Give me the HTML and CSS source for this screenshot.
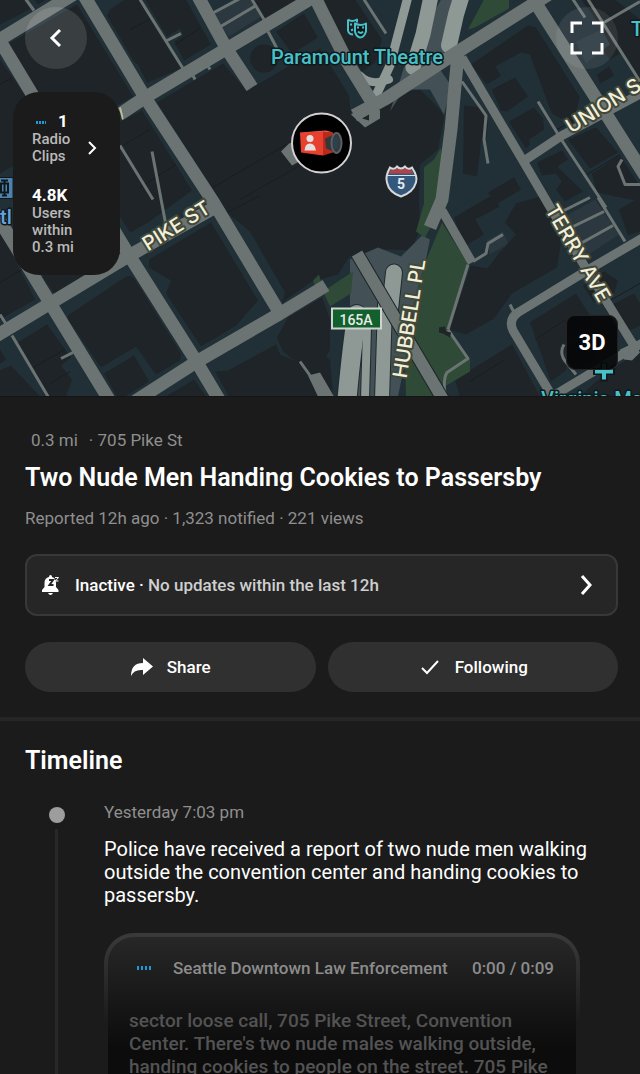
FILE: index.html
```html
<!doctype html>
<html lang="en">
<head>
<meta charset="utf-8">
<meta name="viewport" content="width=device-width, initial-scale=1">
<title>Two Nude Men Handing Cookies to Passersby</title>
<link rel="stylesheet" href="styles.css">
</head>
<body>
<div class="app">
    <section class="map-box">
        <svg class="map" viewBox="0 0 640 397" preserveAspectRatio="xMidYMid slice" role="img" aria-label="Map of the incident">
            <rect class="ground" width="640" height="397"/>
            <!-- buildings -->
            <g class="building">
                <path d="M0 0H22L33 8L0 25ZM34 0H46L38 5ZM9 44L77 5L133 97L101 115L40 101L28 91ZM0 60L26 97L14 110V166L0 174Z"/>
                <path d="M110 10L125 0H139L181 69L147 83L138 65L134 62L107 16ZM145 0H186L211 45L184 61L174 42L183 36L180 29L167 37Z"/>
                <path d="M254 0H302L262 23ZM276 32L304 14L318 38L292 54Z"/>
                <circle cx="264" cy="59" r="14"/>
                <path d="M157 103L223 64L247 92L259 84L320 49L349 96L351 116L363 124L405 92L420 90L440 110L444 118L438 150L420 165L419 200L420 230L411 251L395 250L376 250L366 255L350 256L338 275L312 282L282 303L285 293L250 232L228 214L213 190Z"/>
                <path d="M120 122L142 111L192 191L148 223L130 233L120 217ZM0 230L35 300L0 320ZM0 350L6 360L0 364ZM18 343L47 325L71 358L61 366L72 380L66 397H46Z"/>
                <path d="M149 260L211 223L258 301L236 326L201 347L166 294L171 281L149 268ZM68 316L126 277Q132 275 136 282L181 354L180 361L156 375L136 347L101 368L68 320ZM104 374L134 356L149 382L125 397H117Z"/>
                <path d="M166 397L194 380L206 397ZM215 372L228 371L267 350L276 345L280 355L296 362L320 353L330 360L333 397H229ZM277 338L288 318L322 298L330 320L330 350L324 361L297 363L283 352Z"/>
                <path d="M0 371L11 366L40 397H0ZM44 260L62 270L85 275L55 295L43 278Z"/>
                <path d="M471 65L528 26L536 28L580 98L572 125L552 114L544 93L530 55L521 53L495 67L501 76L487 85Z"/>
                <path d="M492 90L515 78L528 97L507 112L501 111ZM509 122L534 108L543 119L544 130L529 140L530 145L526 149ZM464 106L481 108L488 125L486 140L481 142L477 177L463 174Z"/>
                <path d="M324 0H355L382 40L375 63L362 72L330 18ZM559 0L579 -3L640 80V20L615 0ZM593 38L604 31L620 54L610 60ZM597 75L609 67L614 76L600 84ZM568 140L596 128L618 153L590 169ZM537 163L562 151L568 160L557 167L583 192L565 202L556 190L562 182L556 174L542 176ZM592 174L620 156L640 187V202L597 193ZM488 193L514 178L521 190L496 205Z"/>
                <path d="M454 218L490 197L500 207L475 220L484 235L464 247ZM516 204L540 197L562 235L557 268L512 294L494 319L466 335L449 330L471 266L487 269L493 262L498 255L516 235L505 223Z"/>
                <path d="M530 323L576 294L595 324L563 345L567 370L551 382ZM455 380L512 345L540 397H460ZM583 286L604 272L618 281L614 294L594 303ZM605 309L634 294L640 304V326L630 331L617 326ZM619 210L640 198V232L628 236ZM595 383L640 350V397H580ZM564 347L588 338L600 358L570 372Z"/>
            </g>
            <path class="seam" d="M0 85L12 78M213 188L288 144M240 200L312 159M120 148L150 130M140 188L176 165M130 30L150 20M175 45L200 29M30 370L65 350M50 384L70 372M227 213L260 196M0 283L22 270M470 382L505 360M557 130L598 108M587 175L620 155M608 302L640 284M535 340L566 320"/>
            <!-- parking lots -->
            <path class="lot" d="M212 14L240 0H251L261 17L229 37ZM560 220L595 200L619 235L581 260ZM576 42L602 30L610 45L586 64ZM487 241L503 232L508 244L490 255Z"/>
            <!-- covered freeway -->
            <path class="tunnel" d="M441 0H456L440 70L451 86L444 115L430 90L404 90L390 112L404 68ZM350 260L378 248L401 257L422 236L430 240L398 397H350V300Z"/>
            <path class="green" d="M485 -2H509V9L475 28L468 30ZM441 148L443 180L438 214L425 238L416 232L424 204L424 168L434 160ZM442 223L467 263L448 330L470 360V372L443 388L446 397H406L405 360L412 310L423 268ZM323 292L353 272L351 294L330 307ZM313 281L319 275L321 282L315 286Z"/>
            <g class="freeway-edge">
                <path d="M357 315Q352 345 347 400" stroke-width="21"/>
                <path d="M367 328L365 400" stroke-width="10"/>
                <path d="M385 305L382 400" stroke-width="16"/>
                <path d="M394 273L390 310" stroke-width="18"/>
            </g>
            <g class="freeway">
                <path d="M408 -3L390 66L376 96" stroke-width="9"/>
                <path d="M360 76Q370 87 389 80" stroke-width="8"/>
                <path d="M432 -8L423 35L413 68" stroke-width="15"/>
                <path d="M463 -8L456 15L449 46" stroke-width="16"/>
                <path d="M357 315Q352 345 347 400" stroke-width="19"/>
                <path d="M367 328L365 400" stroke-width="8"/>
                <path d="M385 305L382 400" stroke-width="14"/>
                <path d="M394 273L390 310" stroke-width="16"/>
            </g>
            <!-- alleys -->
            <g class="road alley">
                <path d="M140 0L183 69M181 34L165 42M26 0L34 11M120 146L153 200M152 152L166 226M0 315L7 326M12 336L48 397M61 359L73 353"/>
                <path d="M252 0L264 20M212 14L240 -1M219 28L256 6M268 32L277 49M364 0L386 34M195 80L192 74M210 70L207 65M462 82L486 116L484 140L488 164M538 102L560 138L606 208M573 0L585 18M588 0L640 82M604 23L640 2M552 217L590 198M563 232L604 212M577 246L613 226M598 198L625 242"/>
                <path d="M503 235L488 244L486 254L473 262M640 185H625L618 167L622 160M510 305L514 313M564 345Q558 355 568 365L576 375M300 362L310 376"/>
                <path d="M468 265L448 330M448 330L468 359L447 373Q443 378 445 395"/>
            </g>
            <!-- streets -->
            <g class="road street">
                <path d="M-10 46L75 -6M-2 38L128 254L197 363L222 405M-10 205L112 405M84 -4L145 98L213 202L280 314M197 -5L227 50L252 88"/>
                <path d="M121 114L145 98L227 49L318 -5M-8 339L50 304L133 254L220 205M130 405L197 362L280 314L326 286"/>
                <path d="M312 -8L347 62L374 106M354 116L386 99L455 54L550 -6M458 54L451 130L442 200L430 228M536 4L645 176"/>
            </g>
            <path class="road-fill" d="M289 144L303 140V160L292 166L281 152ZM351 115L372 102L380 111V119L365 128ZM308 376L320 373L334 397H318ZM620 350L635 343L640 353L632 361L624 360Z"/>
            <path class="building" d="M362 119L369 115V121Z"/>
            <g class="road lane">
                <path d="M462 58L524 163L583 264L635 348M523 162L562 136L645 92M645 237L587 271L518 313Q508 320 513 331L557 405M552 397L622 355L645 342M442 211L472 263"/>
            </g>
            <path class="bridge-edge" d="M357 254L446 405"/>
            <path class="bridge" d="M357 254L446 405"/>
            <path class="building" d="M439 328L445 327L446 332L451 333L450 338L443 334L439 333Z"/>
            <!-- street names -->
            <g class="street-name">
                <text transform="translate(180 232) rotate(-32)">PIKE ST</text>
                <text transform="translate(607 112) rotate(-32)">UNION S</text>
                <text transform="translate(572 257) rotate(60)">TERRY AVE</text>
                <text transform="translate(416 320) rotate(-81)">HUBBELL PL</text>
            </g>
            <path class="name-edge" d="M120 108L123 120"/>
            <!-- places -->
            <g class="place">
                <text x="357" y="64" text-anchor="middle">Paramount Theatre</text>
                <text x="631" y="36">T</text>
                <text x="541" y="406">Virginia Ma</text>
            </g>
            <text class="place station" x="0" y="224">tl</text>
            <g class="mask">
                <path d="M348 20Q352 23 357 20V23M348 20V31Q349 35 353 35M350 25H352M351 31L353 30"/>
                <path d="M355 24Q361 27 366 24V32Q364 38 360 38Q356 37 355 32ZM357 28H359M362 28H364M358 32Q361 35 363 32"/>
            </g>
            <path class="cross-edge" d="M604 363V382M593 372H615"/>
            <path class="cross" d="M604 364V380M595 372H613"/>
            <rect class="rail" x="-4" y="178" width="17" height="21"/>
            <path class="rail-icon" d="M1 184H8V193H1ZM1 181H8M2 196H7M4.500 181V196"/>
            <!-- interstate shield -->
            <path class="shield-blue" d="M390 168Q394 171 397 167Q401 171 405 167Q408 171 412 168Q418 177 416 183Q413 193 401 197Q389 193 387 183Q385 177 390 168Z"/>
            <path class="shield-red" d="M389 174L391 169Q394 172 397 168Q401 172 405 168Q408 172 411 169L413 174Z"/>
            <path class="shield-line" d="M387 176H415"/>
            <path class="shield-edge" d="M390 168Q394 171 397 167Q401 171 405 167Q408 171 412 168Q418 177 416 183Q413 193 401 197Q389 193 387 183Q385 177 390 168Z"/>
            <text class="shield-text" x="401" y="189">5</text>
            <rect class="exit" x="332" y="309" width="49" height="20"/>
            <text class="exit-text" x="356" y="325">165A</text>
            <!-- incident pin -->
            <circle class="pin" cx="321.500" cy="143.500" r="29.500"/>
            <path class="cam-top" d="M300 133L326 131L333 133L322 135Z"/>
            <path class="cam" d="M300 133L323 132V156L301 153Z"/>
            <path class="cam-side" d="M323 132L333 133V153L323 156Z"/>
            <path class="cam-user" d="M304.500 151Q305 144 310 144Q315 144 316 151Z"/>
            <circle class="cam-user" cx="310" cy="139" r="3.500"/>
            <path class="cam-tube" d="M325 139L336 134V153L326 149Z"/>
            <ellipse class="cam-lens" cx="336.500" cy="143.500" rx="5" ry="10"/>
            <ellipse class="cam-glass" cx="335.500" cy="143.500" rx="2.500" ry="6"/>
        </svg>

        <button class="round-btn back-btn" type="button" aria-label="Back">
            <svg width="32" height="32" viewBox="0 0 32 32"><path d="M20 8L12 16L20 24"/></svg>
        </button>
        <button class="round-btn full-btn" type="button" aria-label="Full screen">
            <svg width="34" height="34" viewBox="0 0 34 34"><path d="M2 12V2H12M22 2H32V12M32 22V32H22M12 32H2V22"/></svg>
        </button>
        <button class="stats" type="button">
            <span class="stats-list">
                <span class="stats-item">
                    <strong class="stats-num"><svg class="wave" width="14" height="6" viewBox="0 0 14 6"><path d="M5 1V4M8 1V4M11 1V4M14 1V4"/></svg>1</strong>
                    <span>Radio Clips</span>
                </span>
                <span class="stats-item">
                    <strong class="stats-num">4.8K</strong>
                    <span>Users within 0.3 mi</span>
                </span>
            </span>
            <svg class="stats-arrow" width="10" height="16" viewBox="0 0 10 16"><path d="M2 2L8 8L2 14"/></svg>
        </button>
        <button class="view-btn" type="button">3D</button>
    </section>

    <section class="incident">
        <p class="meta place-line"><span>0.3 mi</span><span>· 705 Pike St</span></p>
        <h1 class="title">Two Nude Men Handing Cookies to Passersby</h1>
        <p class="meta">Reported 12h ago · 1,323 notified · 221 views</p>
        <button class="status" type="button">
            <svg class="bell" width="20" height="22" viewBox="0 0 20 22">
                <path class="bell-body" d="M8 3Q8 1 9.500 1Q11 1 11 3Q15 4 15 9V13L17.500 16V18H1V16L3.500 13V9Q3.500 4 8 3ZM7 19H12Q11 21 9.500 21Q8 21 7 19Z"/>
                <path class="bell-cut" d="M8 6H12L8.500 11H12.500"/>
                <path class="bell-zed" d="M14 3.500H17.500L14.500 7H17.500"/>
            </svg>
            <span class="status-text"><b>Inactive ·</b> No updates within the last 12h</span>
            <svg class="status-arrow" width="12" height="20" viewBox="0 0 12 20"><path d="M2 1L10 10L2 19"/></svg>
        </button>
        <div class="actions">
            <button class="action-btn" type="button">
                <svg width="24" height="20" viewBox="0 0 24 20"><path class="share" d="M13 1L23 9.500L13 18V13Q4 12 1 19Q1 6 13 6Z"/></svg>
                Share
            </button>
            <button class="action-btn" type="button">
                <svg width="24" height="20" viewBox="0 0 24 20"><path class="check" d="M4 11L9 16L20 4"/></svg>
                Following
            </button>
        </div>
    </section>

    <section class="timeline">
        <h2 class="title">Timeline</h2>
        <div class="event">
            <div class="event-rail"><i class="event-dot"></i><i class="event-line"></i></div>
            <div class="event-main">
                <p class="meta">Yesterday 7:03 pm</p>
                <p class="event-text">Police have received a report of two nude men walking outside the convention center and handing cookies to passersby.</p>
                <div class="clip">
                    <div class="clip-head">
                        <svg class="clip-wave" width="16" height="6" viewBox="0 0 16 6"><path d="M1 1V5M5 1V5M9 1V5M13 1V5"/></svg>
                        <h3 class="clip-name">Seattle Downtown Law Enforcement</h3>
                        <span class="clip-time">0:00 / 0:09</span>
                    </div>
                    <p class="clip-text">sector loose call, 705 Pike Street, Convention Center. There's two nude males walking outside, handing cookies to people on the street. 705 Pike</p>
                </div>
            </div>
        </div>
    </section>
</div>
</body>
</html>
```
FILE: styles.css
```css
* {
    box-sizing: border-box;
}
body,h1,h2,h3,p {
    margin: 0;
    padding: 0;
}
body {
    background: #1b1b1b;
    color: #fff;
    font-family: Roboto, "Liberation Sans", sans-serif;
    font-size: 17px;
    line-height: 20px;
}
button {
    border: 0 none;
    padding: 0;
    color: #fff;
    font: inherit;
    cursor: pointer;
}
button svg{fill: none;stroke: #fff;stroke-width: 3;}
.app{height: 100vh;overflow: hidden;display: flex;flex-direction: column;}

/* map */
.map-box{position: relative;flex: none;height: 397px;border-bottom: 1px solid #151515;}
.map{display: block;width: 100%;height: 100%;}
.ground{fill: #212f37;}
.building{fill: #1e2427;}
.seam{fill: none;stroke: #171d20;stroke-width: 1;}
.lot{fill: #2b3840;}
.tunnel{fill: #435055;}
.green{fill: #2f4a36;}
.road{fill: none;stroke: #6b7472;stroke-linejoin: round;}
.road-fill{fill: #6b7472;}
.alley{stroke-width: 3;}
.street{stroke-width: 13;}
.lane{stroke-width: 9;}
.freeway{fill: none;stroke: #8e9894;stroke-linecap: round;}
.freeway-edge{fill: none;stroke: #202b2f;stroke-linecap: round;}
.bridge-edge{fill: none;stroke: #1b2428;stroke-width: 14;}
.bridge{fill: none;stroke: #6b7472;stroke-width: 12;}
.street-name{
    font-family: Inter, Roboto, sans-serif;
    font-size: 20px;
    font-weight: 500;
    fill: #f2f0da;
    stroke: #42483a;
    stroke-width: 4;
    stroke-linejoin: round;
    paint-order: stroke;
    text-anchor: middle;
}
.name-edge{stroke: #b9bd98;stroke-width: 2;}
.place{
    font-family: Roboto, sans-serif;
    font-size: 20px;
    font-weight: 500;
    fill: #48c0c8;
    stroke: #10181b;
    stroke-width: 3;
    stroke-linejoin: round;
    paint-order: stroke;
}
.station{fill: #62a5dc;}
.mask{fill: #10181b;stroke: #48c0c8;stroke-width: 2;stroke-linejoin: round;}
.cross-edge{stroke: #10181b;stroke-width: 7;}
.cross{stroke: #48c0c8;stroke-width: 4;}
.rail{fill: #4e82ad;stroke: #10181b;stroke-width: 1;}
.rail-icon{fill: none;stroke: #10181b;stroke-width: 2;}
.shield-blue{fill: #34587c;}
.shield-red{fill: #b0424c;}
.shield-line{stroke: #dcdfe0;stroke-width: 1;}
.shield-edge{fill: none;stroke: #d5d9da;stroke-width: 2;}
.shield-text{font-size: 14px;font-weight: 700;fill: #e8eaea;text-anchor: middle;}
.exit{fill: #13602f;stroke: #ced3cd;stroke-width: 2;}
.exit-text{font-size: 14px;font-weight: 500;fill: #e8ece6;text-anchor: middle;}
.pin{fill: #000;stroke: #d3d0d2;stroke-width: 2;}
.cam{fill: #e8402f;}
.cam-top{fill: #f4624c;}
.cam-side{fill: #b92a1d;}
.cam-user{fill: #e3e0e0;}
.cam-tube{fill: #35383b;}
.cam-lens{fill: #34393c;stroke: #5b5f62;stroke-width: 2;}
.cam-glass{fill: #2b4252;}

.round-btn{position: absolute;top: 7px;width: 62px;height: 62px;border-radius: 50%;background: rgba(255,255,255,0.12);display: flex;align-items: center;justify-content: center;}
.back-btn{left: 25px;}
.full-btn{right: 22px;background: rgba(255,255,255,0.08);}
.stats{position: absolute;top: 92px;left: 13px;width: 107px;padding: 20px 23px 19px 19px;border-radius: 26px;background: #1b1b1b;display: flex;text-align: left;}
.stats-list{flex: 1;display: flex;flex-direction: column;gap: 21px;}
.stats-item{display: flex;flex-direction: column;width: 44px;font-size: 15px;line-height: 17px;font-weight: 500;color: #b9b9b9;}
.stats-num{font-size: 17px;line-height: 19px;font-weight: 700;color: #fff;}
.wave{margin-right: 12px;vertical-align: middle;}
.wave path,.clip-wave path{stroke: #1d9bd8;stroke-width: 2;}
.stats-arrow{margin-top: 28px;flex: none;}
.stats-arrow path{stroke-width: 2;}
.view-btn{position: absolute;right: 22px;bottom: 26px;width: 52px;height: 55px;border: 1px solid #262222;border-radius: 9px;background: rgba(5,7,8,0.92);font-size: 22px;font-weight: 700;}

/* incident */
.meta{color: #8f8f8f;}
.title{font-size: 25px;line-height: 34px;font-weight: 600;}
.incident{flex: none;padding: 33px 22px 25px 25px;border-bottom: 4px solid #262626;}
.place-line{display: flex;gap: 11px;padding-left: 6px;}
.incident .title{margin: 11px 0 13px;}
.status{width: 100%;height: 62px;margin: 26px 0;padding: 0 24px 0 14px;border: 2px solid #383838;border-radius: 12px;background: #262626;display: flex;align-items: center;font-weight: 500;}
.bell{flex: none;margin-right: 14px;}
.bell-body{fill: #fff;stroke: none;}
.bell-cut{stroke: #262626;stroke-width: 2;}
.bell-zed{stroke: #fff;stroke-width: 1;}
.status-text{flex: 1;text-align: left;color: #cfcfcf;}
.status-text b{font-weight: 500;color: #fff;}
.actions{display: grid;grid-template-columns: 1fr 1fr;gap: 12px;}
.action-btn{height: 50px;border-radius: 25px;background: #303030;display: flex;align-items: center;justify-content: center;gap: 13px;font-weight: 500;}
.share{fill: #fff;stroke: none;}
.check{stroke-width: 2;}

/* timeline */
.timeline{flex: 1;min-height: 0;padding: 23px 50px 0 25px;display: flex;flex-direction: column;}
.event{flex: 1;min-height: 0;margin-top: 24px;display: flex;}
.event-rail{width: 63px;margin-right: 16px;padding-top: 5px;display: flex;flex-direction: column;align-items: center;gap: 6px;}
.event-dot{width: 16px;height: 16px;border-radius: 50%;background: #9d9d9d;}
.event-line{flex: 1;width: 3px;background: #282828;}
.event-main{flex: 1;min-width: 0;}
.event-text{margin: 16px 0 26px;font-size: 20px;line-height: 23px;}
.clip{
    height: 200px;
    margin-right: 10px;
    padding: 21px 22px 0 21px;
    border: 4px solid transparent;
    border-radius: 30px;
    background: linear-gradient(#272727, #0c0c0c 110px) padding-box, linear-gradient(#3a3a3a, #1b1b1b 90px) border-box;
}
.clip-head{display: flex;align-items: center;font-weight: 500;color: #8c8c8c;}
.clip-wave{flex: none;margin: 0 20px 0 8px;}
.clip-name{flex: 1;font-size: 17px;font-weight: 500;}
.clip-text{margin-top: 31px;font-size: 19px;line-height: 23px;font-weight: 500;color: #535353;}
```
